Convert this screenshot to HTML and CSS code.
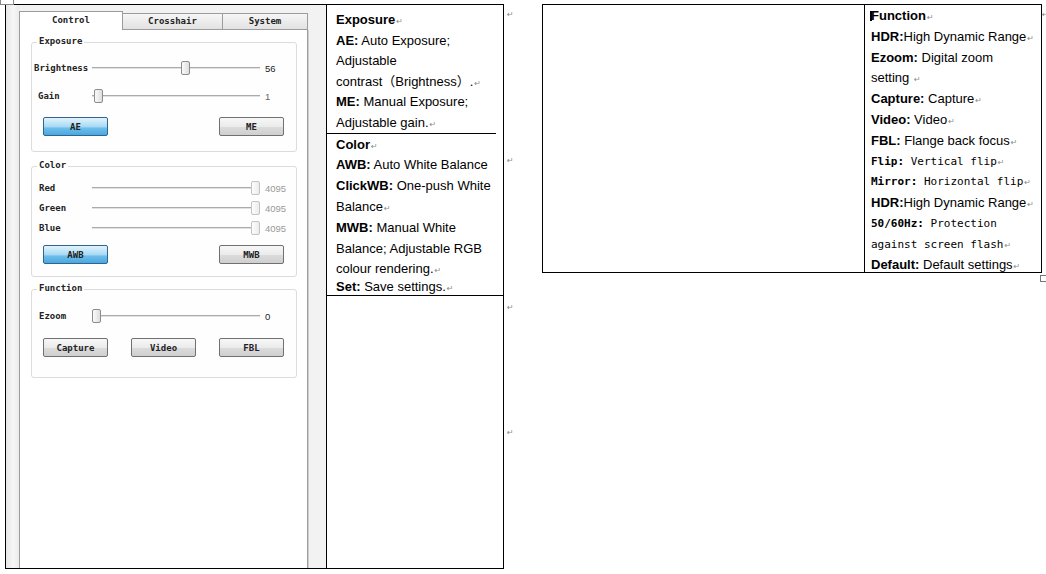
FILE: index.html
```html
<!DOCTYPE html>
<html lang="en">
<head>
    <meta charset="UTF-8">
    <title>Camera control settings</title>
    <link rel="stylesheet" href="styles.css">
</head>
<body>
<div class="page">

    <!-- 左边表格：控制面板截图 + 说明 -->
    <div class="doc-table table-left">
        <span class="move-handle"></span>
        <div class="shot-cell">
            <div class="app">
                <div class="tabs">
                    <div class="tab active">Control</div>
                    <div class="tab tab-cross">Crosshair</div>
                    <div class="tab tab-system">System</div>
                </div>
                <div class="pane">
                    <div class="group group-exposure">
                        <div class="group-title">Exposure</div>
                        <div class="slider-row">
                            <span class="slider-label indent-2">Brightness</span>
                            <div class="slider"><span class="thumb" style="--pos:0.56"></span></div>
                            <span class="slider-value">56</span>
                        </div>
                        <div class="slider-row">
                            <span class="slider-label indent-6">Gain</span>
                            <div class="slider"><span class="thumb" style="--pos:0.01"></span></div>
                            <span class="slider-value muted">1</span>
                        </div>
                        <div class="button-row">
                            <button class="btn btn-on">AE</button>
                            <button class="btn">ME</button>
                        </div>
                    </div>

                    <div class="group group-color">
                        <div class="group-title">Color</div>
                        <div class="slider-row">
                            <span class="slider-label indent-7">Red</span>
                            <div class="slider"><span class="thumb off" style="--pos:1"></span></div>
                            <span class="slider-value faint">4095</span>
                        </div>
                        <div class="slider-row">
                            <span class="slider-label indent-7">Green</span>
                            <div class="slider"><span class="thumb off" style="--pos:1"></span></div>
                            <span class="slider-value faint">4095</span>
                        </div>
                        <div class="slider-row">
                            <span class="slider-label indent-7">Blue</span>
                            <div class="slider"><span class="thumb off" style="--pos:1"></span></div>
                            <span class="slider-value faint">4095</span>
                        </div>
                        <div class="button-row">
                            <button class="btn btn-on">AWB</button>
                            <button class="btn">MWB</button>
                        </div>
                    </div>

                    <div class="group group-function">
                        <div class="group-title">Function</div>
                        <div class="slider-row">
                            <span class="slider-label indent-7">Ezoom</span>
                            <div class="slider"><span class="thumb" style="--pos:0"></span></div>
                            <span class="slider-value">0</span>
                        </div>
                        <div class="button-row">
                            <button class="btn">Capture</button>
                            <button class="btn">Video</button>
                            <button class="btn">FBL</button>
                        </div>
                    </div>
                </div>
            </div>
        </div>

        <div class="notes-cell">
            <div class="notes-row notes-exposure">
                <p><b>Exposure</b><span class="pm">↵</span></p>
                <p><b>AE:</b> Auto Exposure;</p>
                <p>Adjustable</p>
                <p>contrast（Brightness）.<span class="pm">↵</span></p>
                <p><b>ME:</b> Manual Exposure;</p>
                <p>Adjustable gain.<span class="pm">↵</span></p>
            </div>
            <div class="notes-row notes-color">
                <p><b>Color</b><span class="pm">↵</span></p>
                <p><b>AWB:</b> Auto White Balance</p>
                <p><b>ClickWB:</b> One-push White</p>
                <p>Balance<span class="pm">↵</span></p>
                <p><b>MWB:</b> Manual White</p>
                <p>Balance; Adjustable RGB</p>
                <p>colour rendering.<span class="pm">↵</span></p>
                <p class="tight"><b>Set:</b> Save settings.<span class="pm">↵</span></p>
            </div>
            <div class="notes-row notes-empty"></div>
        </div>
    </div>

    <!-- 行尾标记 -->
    <div class="row-marks">
        <span class="pm mark-1">↵</span>
        <span class="pm mark-2">↵</span>
        <span class="pm mark-3">↵</span>
        <span class="pm mark-4">↵</span>
    </div>

    <!-- 右边表格：功能说明 -->
    <div class="doc-table table-right">
        <div class="blank-cell"></div>
        <div class="function-cell">
            <p><span class="caret"></span><b>Function</b><span class="pm">↵</span></p>
            <p><b>HDR:</b>High Dynamic Range<span class="pm">↵</span></p>
            <p><b>Ezoom:</b> Digital zoom</p>
            <p>setting <span class="pm">↵</span></p>
            <p><b>Capture:</b> Capture<span class="pm">↵</span></p>
            <p><b>Video:</b> Video<span class="pm">↵</span></p>
            <p><b>FBL:</b> Flange back focus<span class="pm">↵</span></p>
            <p class="mono"><b>Flip:</b> Vertical flip<span class="pm">↵</span></p>
            <p class="mono"><b>Mirror:</b> Horizontal flip<span class="pm">↵</span></p>
            <p><b>HDR:</b>High Dynamic Range<span class="pm">↵</span></p>
            <p class="mono"><b>50/60Hz:</b> Protection</p>
            <p class="mono">against screen flash<span class="pm">↵</span></p>
            <p class="last"><b>Default:</b> Default settings<span class="pm">↵</span></p>
        </div>
        <span class="resize-handle"></span>
    </div>

    <div class="row-marks row-marks-right">
        <span class="pm mark-1">↵</span>
    </div>
</div>
</body>
</html>
```

FILE: styles.css
```css
/* 页面基础 */
body {
    margin: 0;
    background: #fff;
    color: #000;
    font-family: "Liberation Sans", Arial, "Noto Sans CJK SC", sans-serif;
}

.page {
    display: flex;
    align-items: flex-start;
    padding: 4px 0 0 5px;
}

/* Word 表格 */
.doc-table {
    position: relative;
    display: flex;
    border: 1px solid #000;
    box-sizing: border-box;
}

.table-left {
    width: 499px;
    height: 565px;
}

.move-handle {
    position: absolute;
    top: -11px;
    left: -6px;
    width: 12px;
    height: 9px;
    border: 1px solid #888;
    background: #fff;
}

.shot-cell {
    width: 320px;
    flex: none;
    border-right: 1px solid #000;
    overflow: hidden;
}

/* 软件截图 */
.app {
    height: 100%;
    box-sizing: border-box;
    padding: 6px 18px 0 13px;
    display: flex;
    flex-direction: column;
    background: linear-gradient(to right, #e6e6e6, #f6f6f6 7px, #ececec 13px, #f2f2f2 14px);
    font-family: "DejaVu Sans Mono", "Liberation Mono", monospace;
    font-size: 9px;
    font-weight: bold;
    color: #222;
}

.tabs {
    display: flex;
    align-items: flex-start;
    height: 19px;
}

.tab {
    box-sizing: border-box;
    height: 17px;
    margin-top: 2px;
    border: 1px solid #9c9c9c;
    border-left: none;
    background: linear-gradient(#f6f6f6, #e2e2e2);
    text-align: center;
    line-height: 15px;
}

.tab.active {
    width: 104px;
    height: 19px;
    margin-top: 0;
    border-left: 1px solid #9c9c9c;
    border-bottom: none;
    background: #fff;
    line-height: 17px;
}

.tab-cross {
    width: 100px;
}

.tab-system {
    width: 85px;
}

.pane {
    flex: 1;
    background: #fff;
    border: 1px solid #9c9c9c;
    border-top: none;
    border-bottom: none;
    box-shadow: 1px 0 0 #d0d0d0;
    padding: 12px 10px 0 11px;
}

/* 分组框 */
.group {
    display: flex;
    flex-direction: column;
    border: 1px solid #dcdcdc;
    border-radius: 3px;
    background: #fefefe;
}

.group-exposure {
    gap: 14px;
    padding-bottom: 15px;
}

.group-color {
    gap: 6px;
    margin-top: 14px;
    padding-bottom: 12px;
}

.group-color .slider-row:nth-child(2),
.group-color .button-row {
    margin-top: 4px;
}

.group-function {
    gap: 15px;
    margin-top: 12px;
    padding-bottom: 20px;
}

.group-title {
    align-self: flex-start;
    height: 11px;
    line-height: 11px;
    margin: -7px 0 0 5px;
    padding: 0 2px;
    background: #fff;
}

/* 滑块 */
.slider-row {
    display: flex;
    align-items: center;
    height: 14px;
}

.slider-label {
    width: 60px;
    box-sizing: border-box;
}

.indent-2 { padding-left: 2px; }
.indent-6 { padding-left: 6px; }
.indent-7 { padding-left: 7px; }

.slider {
    position: relative;
    width: 168px;
    height: 14px;
    background: linear-gradient(to bottom, transparent 6px, #ababab 6px, #ababab 7px, #e2e2e2 7px, #e2e2e2 8px, transparent 8px);
}

.thumb {
    position: absolute;
    top: 0;
    left: calc(var(--pos) * (100% - 9px));
    width: 9px;
    height: 14px;
    box-sizing: border-box;
    border: 1px solid #8c8c8c;
    border-radius: 2px;
    background: linear-gradient(to right, #fafafa, #dedede);
}

.thumb.off {
    border-color: #c4c4c4;
    background: linear-gradient(to right, #fdfdfd, #ececec);
}

.slider-value {
    margin-left: 5px;
    font-family: "Liberation Sans", Arial, sans-serif;
    font-size: 9.5px;
    font-weight: normal;
    color: #222;
}

.slider-value.muted {
    color: #666;
}

.slider-value.faint {
    color: #999;
}

/* 按钮 */
.button-row {
    display: flex;
    justify-content: space-between;
    padding: 0 12px 0 11px;
}

.btn {
    width: 65px;
    height: 19px;
    padding: 0;
    border: 1px solid #707070;
    border-radius: 2px;
    background: linear-gradient(#f7f7f7, #ebebeb 50%, #dcdcdc 51%, #cfcfcf);
    font-family: "DejaVu Sans Mono", "Liberation Mono", monospace;
    font-size: 9px;
    font-weight: bold;
    color: #222;
}

.btn-on {
    border-color: #2f6590;
    background: linear-gradient(#e2f3fc, #a9daf5 50%, #6cbdea 60%, #4ba7de);
}

/* 说明单元格 */
.notes-cell {
    width: 176px;
    display: flex;
    flex-direction: column;
}

.notes-cell p,
.function-cell p {
    margin: 0;
    height: 20.8px;
    white-space: nowrap;
    font-size: 13px;
    line-height: 20.8px;
}

.notes-row {
    padding-left: 9px;
}

.notes-exposure {
    padding-top: 4px;
    margin-right: 7px;
    border-bottom: 1px solid #000;
}

.notes-cell .notes-exposure p {
    height: 20.6px;
    line-height: 21.6px;
}

.notes-color {
    padding-top: 1px;
    padding-bottom: 2px;
    border-bottom: 1px solid #000;
}

.notes-cell p.tight {
    height: 13px;
    line-height: 13px;
}

.notes-empty {
    flex: 1;
}

/* 段落标记 */
.pm {
    font-family: "DejaVu Sans", sans-serif;
    font-size: 8px;
    font-weight: normal;
    line-height: 1;
    color: #8a8a8a;
    margin-left: 1px;
}

.row-marks {
    width: 38px;
    flex: none;
    display: flex;
    flex-direction: column;
    align-items: flex-start;
    padding-left: 3px;
    box-sizing: border-box;
}

.row-marks .pm {
    line-height: 12px;
    margin-left: 0;
}

.mark-1 { margin-top: 5px; }
.mark-2 { margin-top: 134px; }
.mark-3 { margin-top: 135px; }
.mark-4 { margin-top: 113px; }

.row-marks-right {
    width: auto;
    padding-left: 0;
}

/* 右边表格 */
.table-right {
    width: 500px;
}

.blank-cell {
    width: 321px;
    flex: none;
    border-right: 1px solid #000;
}

.function-cell {
    width: 176px;
    padding: 1px 0 0 6px;
    box-sizing: border-box;
}

.function-cell p.mono {
    font-family: "DejaVu Sans Mono", "Liberation Mono", monospace;
    font-size: 11px;
}

.function-cell p.last {
    height: 16px;
    line-height: 17px;
}

.caret {
    display: inline-block;
    width: 2px;
    height: 10px;
    margin: 0 -1px 0 -1px;
    background: #000;
    vertical-align: -1px;
}

.resize-handle {
    position: absolute;
    right: -6px;
    bottom: -10px;
    width: 5px;
    height: 5px;
    border: 1px solid #777;
    background: #fff;
}
```
